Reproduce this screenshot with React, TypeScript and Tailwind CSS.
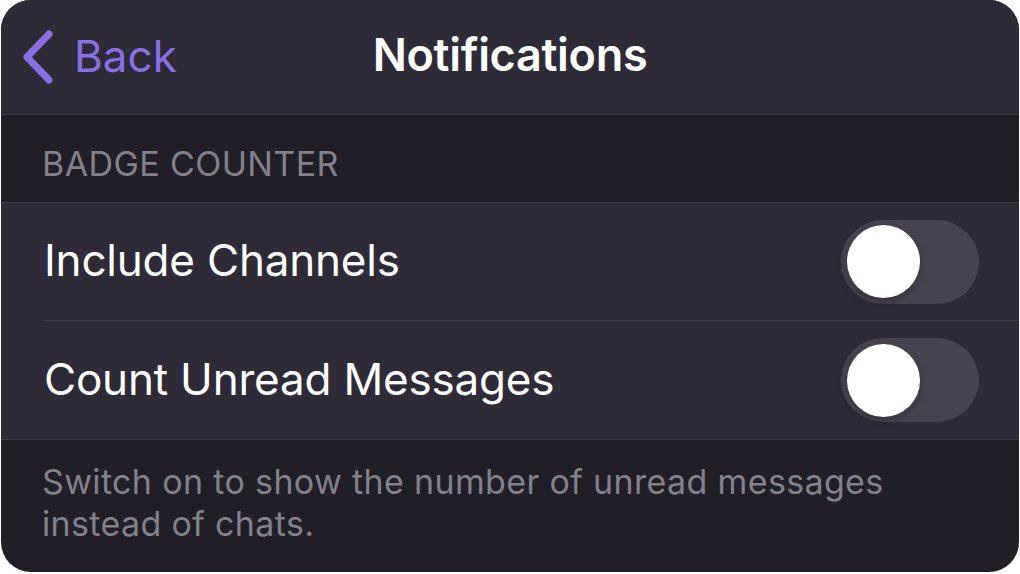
import React from 'react';

function Toggle() {
  return (
    <div className="w-[138px] h-[84px] rounded-full bg-[#46424f] p-[6px] flex items-center">
      <div className="w-[73px] h-[73px] rounded-full bg-white shadow-[0_3px_8px_rgba(0,0,0,0.25)]" />
    </div>
  );
}

function Row({ label, last }: { label: string; last?: boolean }) {
  return (
    <div className="pl-[43px] bg-[#2e2a37]">
      <div
        className={
          'h-[118px] flex items-center justify-between pr-[40px] ' +
          (last ? '' : 'border-b border-[#403c4a]')
        }
      >
        <span className="text-[44px] text-white tracking-[-0.2px] -mt-[3px]">{label}</span>
        <Toggle />
      </div>
    </div>
  );
}

export default function App() {
  return (
    <div className="w-[1020px] h-[574px] bg-white" style={{ fontFamily: 'Inter, "Noto Sans", sans-serif' }}>
      <div className="ml-px w-[1018px] h-[572px] rounded-[30px] overflow-hidden bg-[#211e28] flex flex-col">
        {/* Nav bar */}
        <div className="h-[115px] shrink-0 bg-[#2e2a37] border-b border-[#3d3947] relative flex items-center justify-center">
          <div className="absolute left-[21px] top-0 h-full flex items-center gap-[20px] text-[#8a6fe4]">
            <svg width="32" height="54" viewBox="0 0 32 54" fill="none">
              <path d="M27 4 L5 27 L27 50" stroke="currentColor" strokeWidth="7" strokeLinecap="round" strokeLinejoin="round" />
            </svg>
            <span className="text-[44px] tracking-[0px] -mt-[2px]">Back</span>
          </div>
          <span className="text-[45px] font-semibold text-white tracking-[-0.3px] -mt-[4px]">Notifications</span>
        </div>

        {/* Section header */}
        <div className="h-[88px] shrink-0 flex items-center pl-[41px] border-b border-[#3d3947]">
          <span className="text-[34px] text-[#838089] tracking-[0.4px] pt-[10px]">BADGE COUNTER</span>
        </div>

        <Row label="Include Channels" />
        <Row label="Count Unread Messages" last />

        {/* Footer */}
        <div className="border-t border-[#3d3947] pl-[41px] pr-[40px] pt-[21px] text-[34px] leading-[42px] text-[#82808a] tracking-[0.35px]">
          Switch on to show the number of unread messages instead of chats.
        </div>
      </div>
    </div>
  );
}
